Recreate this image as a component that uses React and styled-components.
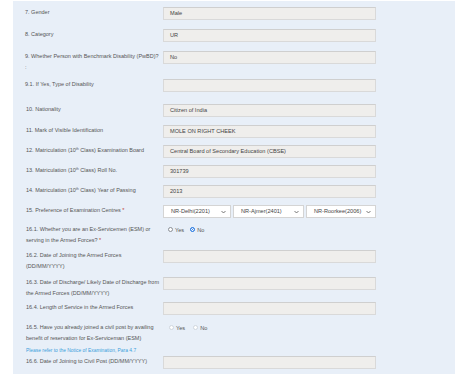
import React from 'react'
import styled, { createGlobalStyle } from 'styled-components'

const Global = createGlobalStyle`
  html, body {
    margin: 0;
    padding: 0;
    background: #ffffff;
  }
  body {
    font-family: "Liberation Sans", Arial, sans-serif;
  }
`

const Page = styled.div`
  width: 474px;
  height: 381px;
  padding: 1px 19px 0 13px;
  box-sizing: border-box;
`

const Panel = styled.div`
  background: #e8eff8;
  padding: 6px 0 4px 12px;
`

const Row = styled.div`
  display: grid;
  grid-template-columns: 138px 213px;
  height: ${p => p.h}px;
  align-items: start;
`

const Label = styled.div`
  font-size: 5.5px;
  line-height: 11px;
  color: #555;
  padding-left: ${p => (p.indent ? 1 : 0)}px;

  sup {
    font-size: 3.6px;
    vertical-align: 2px;
    line-height: 0;
  }
`

const Req = styled.span`
  color: #c0392b;
`

const Field = styled.div`
  height: 13px;
  box-sizing: border-box;
  background: #efeeec;
  border: 1px solid #d9d9d9;
  border-top-color: #cfcfcf;
  font-size: 5.6px;
  line-height: 11px;
  color: #444;
  padding-left: 6px;
  white-space: nowrap;
  overflow: hidden;
`

const Selects = styled.div`
  display: grid;
  grid-template-columns: 68px 71px 70px;
  column-gap: 2px;
`

const SelectBox = styled.div`
  position: relative;
  height: 13px;
  box-sizing: border-box;
  background: #ffffff;
  border: 1px solid #d4d4d4;
  font-size: 5.6px;
  line-height: 11px;
  color: #444;
  padding-left: 7px;

  svg {
    position: absolute;
    right: 4px;
    top: 4px;
  }
`

const Radios = styled.div`
  display: flex;
  align-items: center;
  height: 11px;
  padding-left: ${p => p.pad}px;
  gap: ${p => p.gap}px;
`

const RadioItem = styled.label`
  display: flex;
  align-items: center;
  gap: 2px;
  font-size: 5.6px;
  color: #555;
`

const Dot = styled.span`
  width: 5px;
  height: 5px;
  border-radius: 50%;
  box-sizing: border-box;
  border: 0.6px solid ${p => (p.on ? '#2f7de1' : p.faint ? '#d0d6de' : '#8a8f96')};
  background: ${p => (p.on ? '#2f7de1' : '#ffffff')};
  box-shadow: ${p => (p.on ? 'inset 0 0 0 0.9px #ffffff' : 'none')};
`

const Note = styled.div`
  font-size: 4.9px;
  line-height: 11px;
  color: #3aa0dc;
  height: 11px;
  padding-left: 1px;
`

const Chevron = () => (
  <svg width="5" height="4" viewBox="0 0 10 6">
    <path d="M1 1l4 4 4-4" fill="none" stroke="#555" strokeWidth="1.6" />
  </svg>
)

const Select = ({ value }) => (
  <SelectBox>
    {value}
    <Chevron />
  </SelectBox>
)

const Radio = ({ label, on, faint }) => (
  <RadioItem>
    <Dot on={on} faint={faint} />
    {label}
  </RadioItem>
)

export default function App() {
  return (
    <>
      <Global />
      <Page>
        <Panel>
          <Row h={22}>
            <Label>7. Gender</Label>
            <Field>Male</Field>
          </Row>
          <Row h={22}>
            <Label>8. Category</Label>
            <Field>UR</Field>
          </Row>
          <Row h={28}>
            <Label>9. Whether Person with Benchmark Disability (PwBD)?<br />:</Label>
            <Field>No</Field>
          </Row>
          <Row h={25}>
            <Label>9.1. If Yes, Type of Disability</Label>
            <Field />
          </Row>
          <Row h={21}>
            <Label indent>10. Nationality</Label>
            <Field>Citizen of India</Field>
          </Row>
          <Row h={20}>
            <Label indent>11. Mark of Visible Identification</Label>
            <Field>MOLE ON RIGHT CHEEK</Field>
          </Row>
          <Row h={20}>
            <Label indent>12. Matriculation (10<sup>th</sup> Class) Examination Board</Label>
            <Field>Central Board of Secondary Education (CBSE)</Field>
          </Row>
          <Row h={20}>
            <Label indent>13. Matriculation (10<sup>th</sup> Class) Roll No.</Label>
            <Field>301739</Field>
          </Row>
          <Row h={20}>
            <Label indent>14. Matriculation (10<sup>th</sup> Class) Year of Passing</Label>
            <Field>2013</Field>
          </Row>
          <Row h={19}>
            <Label indent>15. Preference of Examination Centres <Req>*</Req></Label>
            <Selects>
              <Select value="NR-Delhi(2201)" />
              <Select value="NR-Ajmer(2401)" />
              <Select value="NR-Roorkee(2006)" />
            </Selects>
          </Row>
          <Row h={26}>
            <Label indent>16.1. Whether you are an Ex-Servicemen (ESM) or serving in the Armed Forces? <Req>*</Req></Label>
            <Radios pad={5} gap={6}>
              <Radio label="Yes" />
              <Radio label="No" on />
            </Radios>
          </Row>
          <Row h={27}>
            <Label indent>16.2. Date of Joining the Armed Forces<br />(DD/MM/YYYY)</Label>
            <Field />
          </Row>
          <Row h={25}>
            <Label indent>16.3. Date of Discharge/ Likely Date of Discharge from the Armed Forces (DD/MM/YYYY)</Label>
            <Field />
          </Row>
          <Row h={20}>
            <Label indent>16.4. Length of Service in the Armed Forces</Label>
            <Field />
          </Row>
          <Row h={23}>
            <Label indent>16.5. Have you already joined a civil post by availing benefit of reservation for Ex-Serviceman (ESM)</Label>
            <Radios pad={6} gap={8}>
              <Radio label="Yes" faint />
              <Radio label="No" faint />
            </Radios>
          </Row>
          <Note>Please refer to the Notice of Examination, Para 4.7</Note>
          <Row h={14}>
            <Label indent>16.6. Date of Joining to Civil Post (DD/MM/YYYY)</Label>
            <Field />
          </Row>
        </Panel>
      </Page>
    </>
  )
}
